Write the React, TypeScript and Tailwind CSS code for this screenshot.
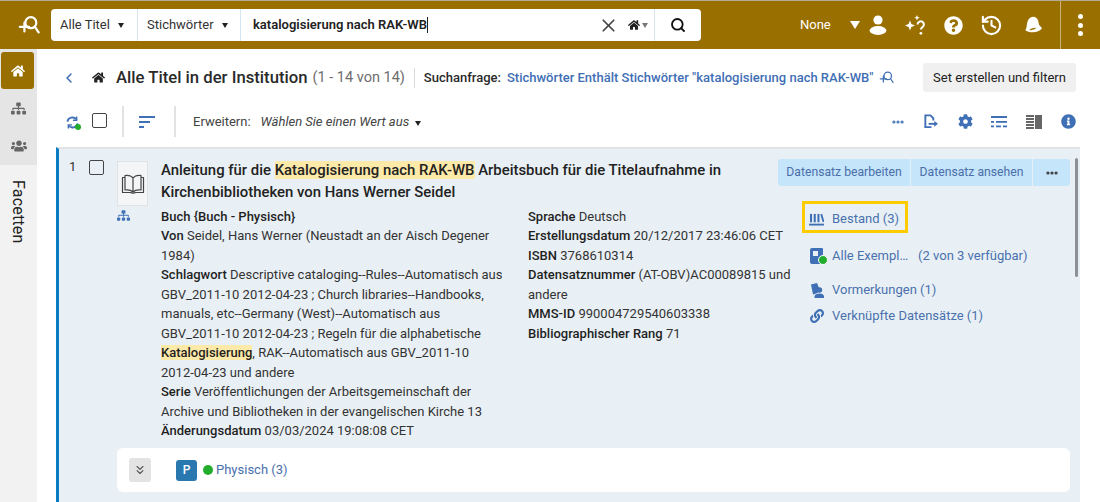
import React from "react";
import { ChevronLeft, X, Search, MoreHorizontal, ChevronsDown, History } from "lucide-react";
import { FaHome, FaUsers, FaSitemap, FaQuestionCircle, FaCog, FaInfoCircle, FaLink } from "react-icons/fa";

const Caret = () => (
  <span className="inline-block w-0 h-0 border-l-[3.5px] border-r-[3.5px] border-t-[5px] border-l-transparent border-r-transparent border-t-[#222]" />
);

const HL = ({ children }: { children: React.ReactNode }) => <span className="bg-[#fde9a8]">{children}</span>;
const B = ({ children }: { children: React.ReactNode }) => <span className="font-medium text-[#1f1f1f]">{children}</span>;

const SearchPlus = ({ cls, sw = 2 }: { cls: string; sw?: number }) => (
  <svg viewBox="0 0 24 24" className={cls} fill="none" stroke="currentColor" strokeWidth={sw} strokeLinecap="round">
    <circle cx="14" cy="9.5" r="6" />
    <path d="M18.5 14l4 6M2 14h10M7 9.5v9.5" />
  </svg>
);

export default function App() {
  return (
    <div className="w-[1100px] h-[502px] overflow-hidden bg-white flex flex-col font-['Roboto',sans-serif] text-[13px] text-[#333]">
      <header className="h-[49px] shrink-0 bg-[#996f00] border-t-[1px] border-[#b5aa94] flex items-center text-white">
        <div className="w-[51px] flex justify-center pl-[6px]">
          <SearchPlus cls="w-[22px] h-[22px]" sw={2.4} />
        </div>
        <div className="w-[650px] h-[32px] bg-white rounded-[4px] flex items-center text-[#333] text-[13px]">
          <div className="w-[87px] h-full flex items-center gap-[8px] pl-[9px] border-r border-[#d5e6f3]">
            <span>Alle Titel</span><Caret />
          </div>
          <div className="w-[103px] h-full flex items-center gap-[8px] pl-[9px] border-r border-[#d5e6f3]">
            <span>Stichwörter</span><Caret />
          </div>
          <div className="w-[414px] h-full flex items-center pl-[12px] border-r border-[#d5e6f3]">
            <span className="font-semibold text-[#222] text-[13px] border-r border-[#222] leading-[16px]">katalogisierung nach RAK-WB</span>
            <X className="ml-auto w-[21px] h-[21px] text-[#444]" strokeWidth={2} />
            <FaHome className="ml-[9px] w-[12px] h-[12px] text-[#222]" />
            <span className="ml-[2px] mr-[6px] w-0 h-0 border-l-[3px] border-r-[3px] border-t-[5px] border-l-transparent border-r-transparent border-t-[#777]" />
          </div>
          <div className="flex-1 flex justify-center"><Search className="w-[16px] h-[16px] text-[#111]" strokeWidth={2.8} /></div>
        </div>
        <div className="flex-1 flex items-center h-full pl-[99px]">
          <span className="text-[13px]">None</span>
          <span className="ml-[19px] w-0 h-0 border-l-[5px] border-r-[5px] border-t-[8px] border-l-transparent border-r-transparent border-t-white" />
          <svg viewBox="0 0 18 20" className="ml-[9px] w-[18px] h-[20px]" fill="white"><circle cx="9" cy="5" r="4.6" /><ellipse cx="9" cy="15.5" rx="8.4" ry="4.4" /></svg>
          <svg viewBox="0 0 24 24" className="ml-[16px] w-[24px] h-[24px]" fill="white">
            <path d="M7 7.5l1.4 3.6 3.6 1.4-3.6 1.4L7 17.5l-1.4-3.6L2 12.5l3.6-1.4zM14 2l.8 2 2 .8-2 .8-.8 2-.8-2-2-.8 2-.8z" />
            <path d="M14.5 11.5a3.2 3.2 0 1 1 5 2.7c-1 .7-1.6 1.2-1.6 2.3" fill="none" stroke="white" strokeWidth="2" />
            <circle cx="17.9" cy="20.3" r="1.4" />
          </svg>
          <FaQuestionCircle className="ml-[17px] w-[19px] h-[19px]" />
          <History className="ml-[17px] w-[23px] h-[23px]" strokeWidth={2.2} />
          <svg viewBox="0 0 20 20" className="ml-[21px] w-[19px] h-[20px]" fill="white">
            <path d="M1.5 15.5C3.5 12 2.5 8 4.5 4.5 6.5 1 11 .5 13 2.5c2.5 2 2.2 5.5 3 7.5l3 3.5c-3 4.5-12.5 5.5-17.5 2z" />
            <path d="M5.5 15.2c2-1.6 5-2.4 7.5-2.2-1.5 1.7-5 2.9-7.5 2.2z" fill="#996f00" />
          </svg>
          <span className="ml-[17px] h-full w-px bg-[#c9b27a]" />
          <div className="ml-[17px] flex flex-col gap-[3.5px]">
            <span className="w-[5px] h-[5px] rounded-full bg-white" />
            <span className="w-[5px] h-[5px] rounded-full bg-white" />
            <span className="w-[5px] h-[5px] rounded-full bg-white" />
          </div>
        </div>
      </header>

      <div className="flex-1 flex min-h-0">
        <aside className="w-[37px] shrink-0 bg-[#f2f2f2] flex flex-col">
          <div className="h-[116px] shrink-0 bg-[#e5e5e5] flex flex-col items-center">
            <div className="mt-[3px] -ml-[2px] w-[33px] h-[37px] rounded-[3px] bg-[#996f00] flex items-center justify-center">
              <FaHome className="w-[14px] h-[14px] text-white" />
            </div>
            <div className="h-[38px] w-full flex items-center justify-center">
              <FaSitemap className="w-[15px] h-[15px] text-[#666]" />
            </div>
            <div className="h-[38px] w-full flex items-center justify-center">
              <FaUsers className="w-[16px] h-[16px] text-[#666]" />
            </div>
          </div>
          <div className="mt-[15px] ml-[6px] w-[24px] leading-[24px] [writing-mode:vertical-rl] text-[16px] text-[#222] tracking-[0.2px]">Facetten</div>
        </aside>

        <main className="flex-1 min-w-0 flex flex-col pl-[19px] pr-[20px]">
          <div className="h-[57px] shrink-0 flex items-center">
            <ChevronLeft className="ml-[5px] w-[16px] h-[16px] text-[#3c6cb4]" strokeWidth={2.2} />
            <FaHome className="ml-[15px] w-[13px] h-[13px] text-[#222]" />
            <span className="ml-[11px] text-[16.7px] font-medium text-[#2a2a2a]">Alle Titel in der Institution</span>
            <span className="ml-[5px] text-[14.5px] text-[#6d6d6d]">(1 - 14 von 14)</span>
            <span className="ml-[9px] h-[20px] w-px bg-[#d9d9d9]" />
            <span className="ml-[9px] font-medium text-[#2a2a2a]">Suchanfrage:</span>
            <span className="ml-[6px] font-medium text-[#3f6fb5]">Stichwörter Enthält Stichwörter "katalogisierung nach RAK-WB"</span>
            <SearchPlus cls="ml-[6px] w-[15px] h-[15px] text-[#3f6fb5]" sw={2} />
            <button className="ml-auto mr-[4px] w-[153px] h-[29px] rounded-[3px] bg-[#f0f0f0] text-[13px] text-[#222]">Set erstellen und filtern</button>
          </div>

          <div className="h-[40px] shrink-0 flex items-start">
            <div className="h-[31px] flex items-center w-full">
              <div className="ml-[10px] relative w-[13px] h-[13px] mt-[2px]">
                <svg viewBox="0 0 14 14" className="w-[13px] h-[13px]" fill="none" stroke="#3f6fb5" strokeWidth="2"><path d="M1.5 6A5.5 5.5 0 0 1 11 3.5M12.5 8A5.5 5.5 0 0 1 3 10.5" /><path d="M11.5 0.5v4h-4M2.5 13.5v-4h4" strokeWidth="1.5" /></svg>
                <span className="absolute rounded-full bg-[#22ad2c] w-[6px] h-[6px] -right-[2px] -bottom-[1px]" />
              </div>
              <span className="ml-[13px] w-[15px] h-[15px] rounded-[2px] border-[1.5px] border-[#444] bg-white -mt-[2px]" />
              <span className="ml-[15px] w-[2px] h-[31px] bg-[#e3e3e3]" />
              <svg viewBox="0 0 16 13" className="ml-[15px] w-[16px] h-[13px] mt-[2px]" fill="#3f6fb5"><rect width="16" height="2" /><rect y="5" width="11" height="2" /><rect y="10" width="5" height="2" /></svg>
              <span className="ml-[19px] w-[2px] h-[31px] bg-[#e3e3e3]" />
              <span className="ml-[17px] text-[#444]">Erweitern:</span>
              <span className="ml-[10px] italic text-[#444]">Wählen Sie einen Wert aus</span>
              <span className="ml-[6px] mt-[3px] flex"><Caret /></span>
              <div className="ml-auto flex items-center text-[#3f6fb5] pr-[4px]">
                <MoreHorizontal className="w-[14px] h-[14px]" strokeWidth={3.5} />
                <svg viewBox="0 0 16 16" className="ml-[18px] w-[15px] h-[15px]" fill="none" stroke="#3f6fb5" strokeWidth="2"><path d="M9 14H2.5V1.5H8l3 3V7" /><path d="M6 10.5h7" /><path d="M12 7.5l4 3-4 3z" fill="#3f6fb5" stroke="none" /></svg>
                <FaCog className="ml-[20px] w-[15px] h-[15px]" />
                <svg viewBox="0 0 16 12" className="ml-[18px] w-[16px] h-[12px]" fill="#3f6fb5"><rect width="16" height="2" /><rect y="5" width="3" height="1.8" /><rect x="5" y="5" width="11" height="1.8" /><rect y="9.5" width="3" height="1.8" /><rect x="5" y="9.5" width="5" height="1.8" /><rect x="12" y="9.5" width="4" height="1.8" /></svg>
                <svg viewBox="0 0 16 14" className="ml-[19px] w-[16px] h-[14px]" fill="#666"><rect x="9" width="7" height="14" /><rect width="8" height="2" /><rect y="3" width="8" height="2" /><rect y="6" width="8" height="2" /><rect y="9" width="8" height="2" /><rect y="12" width="8" height="2" /></svg>
                <FaInfoCircle className="ml-[19px] w-[15px] h-[15px]" />
              </div>
            </div>
          </div>

          <div className="flex-1 min-h-0 border-t-[2px] border-[#e1e3e5] bg-[#e9f0f5] border-l-[3px] border-l-[#0a7cc1] flex flex-col relative mt-[1px] overflow-hidden">
            <div className="absolute right-[2px] top-[9px] w-[3px] h-[119px] bg-[#8d9195] rounded-full" />
            <div className="flex flex-1 min-h-0">
              <div className="w-[58px] shrink-0 flex items-start pt-[11px]">
                <span className="ml-[10px] text-[#333] leading-[14px]">1</span>
                <span className="ml-[13px] w-[15px] h-[15px] rounded-[2px] border-[1.5px] border-[#444] bg-[#e9f0f5]" />
              </div>
              <div className="w-[44px] shrink-0 flex flex-col items-start pt-[12px]">
                <div className="w-[31px] h-[45px] bg-[#f3f5f7] border border-[#e0e3e5] flex items-center justify-center">
                  <svg viewBox="0 0 24 20" className="w-[24px] h-[20px]" fill="none" stroke="#444" strokeWidth="1.2" strokeLinejoin="round">
                    <path d="M12 4C10 1.5 7 1 4 1.5V16c3-.5 6 0 8 2 2-2 5-2.5 8-2V1.5C17 1 14 1.5 12 4zM12 4v14" />
                    <path d="M4 3.5H1.5V18.5H9.5c1 .8 4 .8 5 0h8V3.5H20" />
                  </svg>
                </div>
                <FaSitemap className="mt-[3px] w-[13px] h-[13px] text-[#3f6fb5]" />
              </div>
              <div className="w-[603px] shrink-0 pt-[10px]">
                <div className="text-[14.9px] font-medium leading-[22px] text-[#222] whitespace-nowrap">
                  Anleitung für die <HL>Katalogisierung nach RAK-WB</HL> Arbeitsbuch für die Titelaufnahme in<br />
                  Kirchenbibliotheken von Hans Werner Seidel
                </div>
                <div className="flex mt-[4px] leading-[19.45px] text-[13px]">
                  <div className="w-[367px] shrink-0 whitespace-nowrap">
                    <div><B>Buch {"{Buch - Physisch}"}</B></div>
                    <div><B>Von</B> Seidel, Hans Werner (Neustadt an der Aisch Degener</div>
                    <div>1984)</div>
                    <div><B>Schlagwort</B> Descriptive cataloging--Rules--Automatisch aus</div>
                    <div>GBV_2011-10 2012-04-23 ; Church libraries--Handbooks,</div>
                    <div>manuals, etc--Germany (West)--Automatisch aus</div>
                    <div>GBV_2011-10 2012-04-23 ; Regeln für die alphabetische</div>
                    <div><HL><B>Katalogisierung</B></HL>, RAK--Automatisch aus GBV_2011-10</div>
                    <div>2012-04-23 und andere</div>
                    <div><B>Serie</B> Veröffentlichungen der Arbeitsgemeinschaft der</div>
                    <div>Archive und Bibliotheken in der evangelischen Kirche 13</div>
                    <div><B>Änderungsdatum</B> 03/03/2024 19:08:08 CET</div>
                  </div>
                  <div className="flex-1 whitespace-nowrap">
                    <div><B>Sprache</B> Deutsch</div>
                    <div><B>Erstellungsdatum</B> 20/12/2017 23:46:06 CET</div>
                    <div><B>ISBN</B> 3768610314</div>
                    <div><B>Datensatznummer</B> (AT-OBV)AC00089815 und</div>
                    <div>andere</div>
                    <div><B>MMS-ID</B> 990004729540603338</div>
                    <div><B>Bibliographischer Rang</B> 71</div>
                  </div>
                </div>
              </div>
              <div className="flex-1 min-w-0 pt-[10px] pl-[14px] pr-[10px] text-[#4a70ae]">
                <div className="h-[27px] bg-[#c5e5fb] rounded-[3px] flex items-center text-[12.2px] text-[#4a6ea9]">
                  <span className="w-[133px] text-center border-r border-[#e9f0f5] leading-[27px]">Datensatz bearbeiten</span>
                  <span className="w-[122px] text-center border-r border-[#e9f0f5] leading-[27px]">Datensatz ansehen</span>
                  <span className="flex-1 flex justify-center"><MoreHorizontal className="w-[14px] h-[14px] text-[#333]" strokeWidth={3.5} /></span>
                </div>
                <div className="ml-[24px] mt-[15px] w-[106px] h-[32px] border-[3px] border-[#fdcb00] flex items-center pl-[4px] pt-[4px]">
                  <svg viewBox="0 0 16 14" className="w-[15px] h-[13px]" fill="#3f6fb5"><rect x="1" y="1" width="2.2" height="9" /><rect x="5" y="1" width="2.2" height="9" /><rect x="9" y="1" width="2.2" height="9" /><path d="M12.2 1.5l1.9-.6 2.4 8.5-1.9.6z" /><rect y="11.5" width="16" height="2" /></svg>
                  <span className="ml-[8px]">Bestand (3)</span>
                </div>
                <div className="ml-[32px] mt-[11px] flex items-center h-[24px]">
                  <div className="relative w-[14px] h-[16px]">
                    <svg viewBox="0 0 13 16" className="w-[13px] h-[16px]" fill="#3f6fb5"><path d="M2 0h10a1 1 0 0 1 1 1v14a1 1 0 0 1-1 1H2a2 2 0 0 1-2-2V2a2 2 0 0 1 2-2z" /><rect x="3" y="3" width="5" height="5" fill="#e9f0f5" /></svg>
                    <span className="absolute -right-[4px] -bottom-[1px] w-[10px] h-[10px] rounded-full bg-[#22ad2c] border border-white" />
                  </div>
                  <span className="ml-[8px]">Alle Exempl…</span>
                  <span className="ml-[10px]">(2 von 3 verfügbar)</span>
                </div>
                <div className="ml-[32px] mt-[10px] flex items-center h-[24px]">
                  <svg viewBox="0 0 14 15" className="w-[14px] h-[15px]" fill="#3f6fb5"><path d="M1 1.5 7 0l2 5a3 3 0 0 0-.7 4.5L5 11l-2 .5z" /><circle cx="9.5" cy="7" r="2.7" /><path d="M4.5 15v-1.5c0-2 2.500-3 5-3s4.500 1 4.500 3V15z" /></svg>
                  <span className="ml-[8px]">Vormerkungen (1)</span>
                </div>
                <div className="ml-[32px] mt-[2px] flex items-center h-[24px]">
                  <FaLink className="w-[14px] h-[14px] text-[#3f6fb5]" />
                  <span className="ml-[8px]">Verknüpfte Datensätze (1)</span>
                </div>
              </div>
            </div>
            <div className="shrink-0 h-[44px] ml-[58px] mr-[10px] mb-[10px] mt-[8px] bg-white rounded-[6px] flex items-center">
              <span className="ml-[12px] w-[22px] h-[24px] rounded-[3px] bg-[#e3e3e3] flex items-center justify-center">
                <ChevronsDown className="w-[14px] h-[14px] text-[#555]" strokeWidth={2} />
              </span>
              <span className="ml-[25px] w-[21px] h-[21px] rounded-[3px] bg-[#2a78b0] text-white text-[12px] font-medium flex items-center justify-center">P</span>
              <span className="ml-[6px] w-[10px] h-[10px] rounded-full bg-[#22ad2c]" />
              <span className="ml-[3px] text-[#4a70ae]">Physisch (3)</span>
            </div>
          </div>
        </main>
      </div>
    </div>
  );
}
